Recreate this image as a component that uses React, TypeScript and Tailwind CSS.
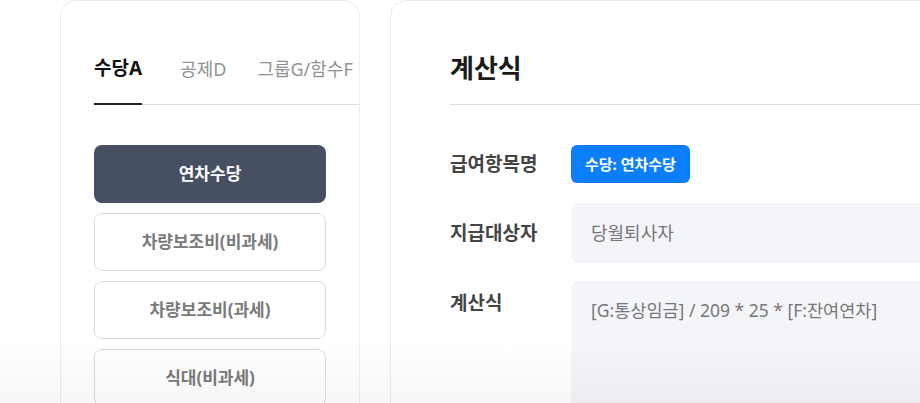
import React from "react";

const font = { fontFamily: '"Noto Sans", "Noto Sans CJK KR", sans-serif' };

export default function App() {
  const items = ["차량보조비(비과세)", "차량보조비(과세)", "식대(비과세)"];
  return (
    <div className="relative w-[920px] h-[403px] overflow-hidden bg-white" style={font}>
      <div className="flex pl-[60px] gap-[30px] h-full">
        {/* Left card */}
        <div className="w-[300px] shrink-0 h-[460px] border border-[#ebebeb] rounded-[16px] overflow-hidden pt-[49px] px-[33px]">
          <div className="flex items-end whitespace-nowrap border-b border-[#dcdcdc] mr-[-40px] leading-[36px]">
            <div className="text-[19px] font-bold text-[#111] border-b-2 border-[#222] -mb-px pb-[17px]">수당A</div>
            <div className="ml-[38px] text-[18px] text-[#929292] pb-[17px]">공제D</div>
            <div className="ml-[31px] text-[18px] text-[#929292] pb-[17px]">그룹G/함수F</div>
          </div>
          <div className="mt-[40px] flex flex-col gap-[10px]">
            <div className="h-[58px] rounded-[8px] bg-[#475063] flex items-center justify-center text-white font-bold text-[17px]">
              연차수당
            </div>
            {items.map((t) => (
              <div
                key={t}
                className="h-[58px] rounded-[8px] border border-[#dadada] bg-white flex items-center justify-center text-[#7a7a7a] font-bold text-[17px]"
              >
                {t}
              </div>
            ))}
          </div>
        </div>

        {/* Right card */}
        <div className="w-[620px] shrink-0 h-[460px] border border-[#ebebeb] rounded-[16px] overflow-hidden pt-[49px] pl-[59px]">
          <div className="text-[26px] leading-[36px] font-bold text-[#1a1a1a] pb-[18px] border-b border-[#dcdcdc]">
            계산식
          </div>
          <div className="mt-[40px] flex items-center h-[38px]">
            <div className="w-[121px] shrink-0 text-[19px] font-bold text-[#444]">급여항목명</div>
            <div className="h-[38px] px-[14px] rounded-[6px] bg-[#0b7ffa] text-white text-[15px] font-bold flex items-center">
              수당: 연차수당
            </div>
          </div>
          <div className="mt-[20px] flex items-center h-[60px]">
            <div className="w-[121px] shrink-0 text-[19px] font-bold text-[#444]">지급대상자</div>
            <div className="flex-1 h-[60px] rounded-[6px] bg-[#f4f5f9] flex items-center pl-[20px] text-[18px] text-[#777]">
              당월퇴사자
            </div>
          </div>
          <div className="mt-[18px] flex items-start">
            <div className="w-[121px] shrink-0 text-[19px] font-bold text-[#444] pt-[7px] leading-[30px]">계산식</div>
            <div className="flex-1 h-[160px] rounded-[6px] bg-[#f4f5f9] pt-[14px] pl-[20px] text-[17.5px] leading-[30px] text-[#777]">
              [G:통상임금] / 209 * 25 * [F:잔여연차]
            </div>
          </div>
        </div>
      </div>
      <div className="pointer-events-none absolute left-0 right-0 bottom-0 h-[60px] bg-gradient-to-b from-transparent to-black/[0.035]" />
    </div>
  );
}
